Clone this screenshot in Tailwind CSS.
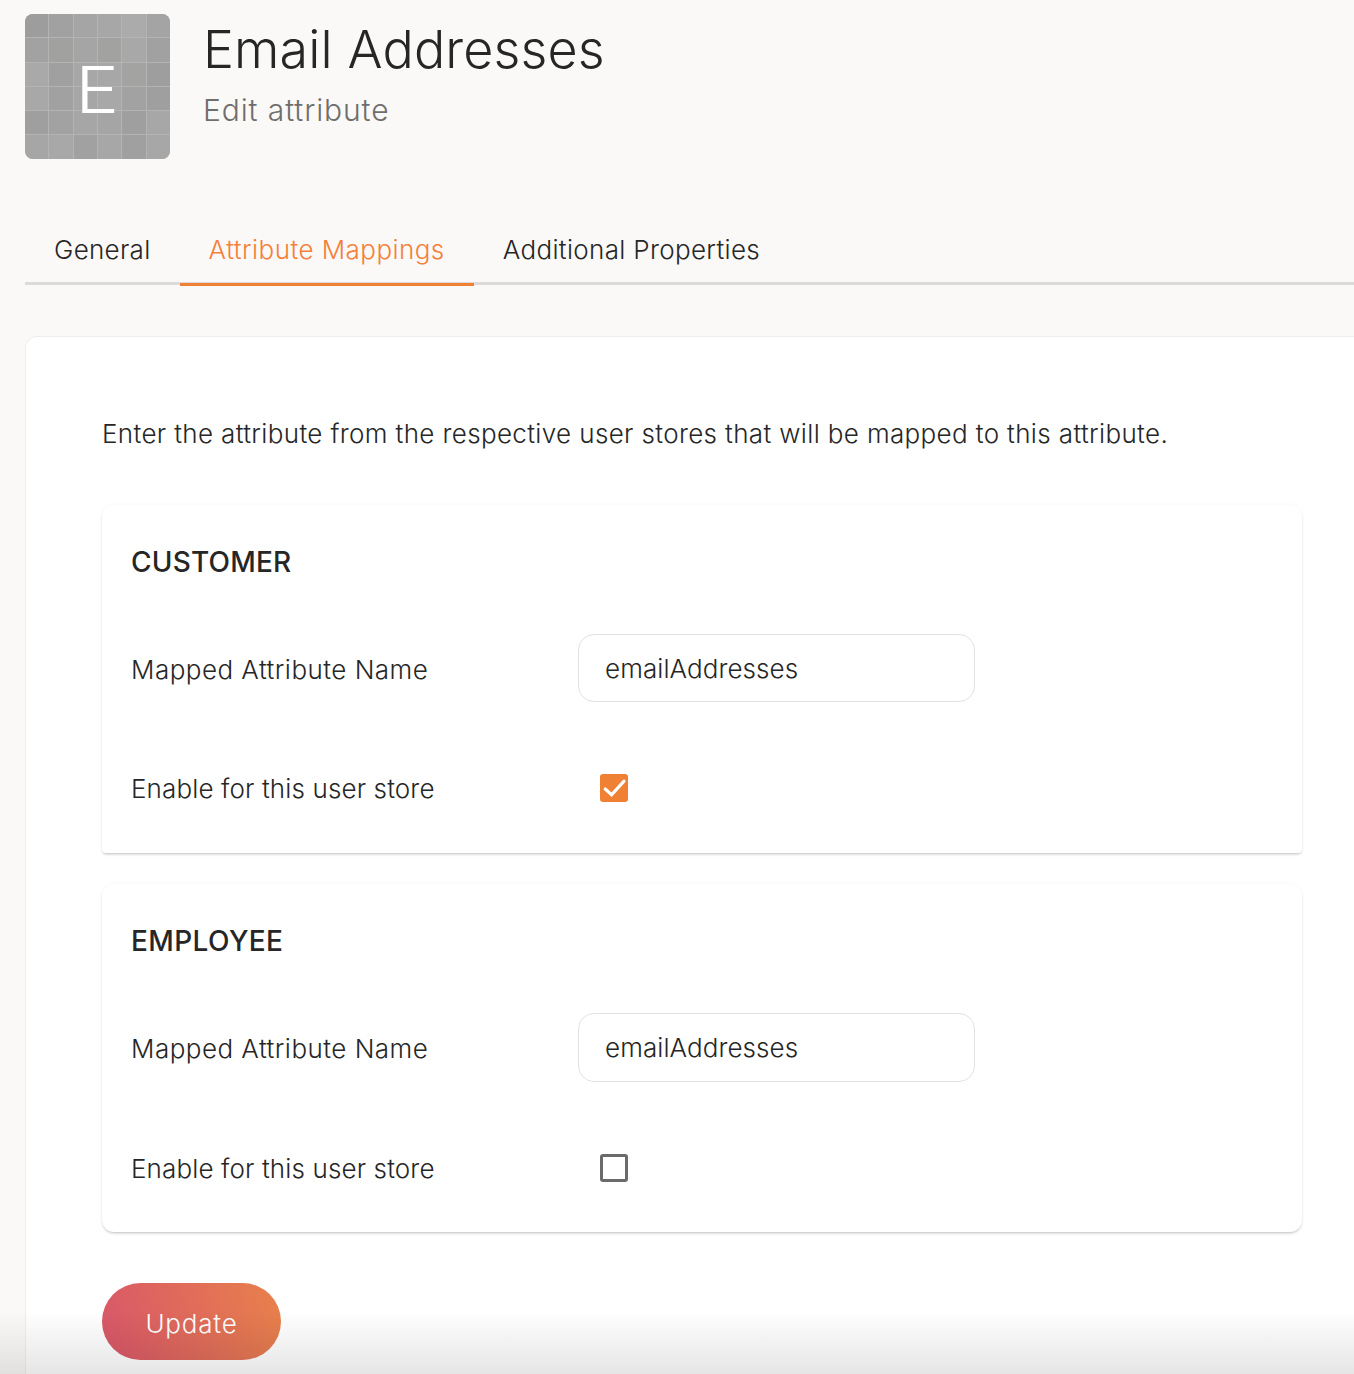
<!DOCTYPE html>
<html lang="en">
<head>
    <meta charset="UTF-8">
    <meta name="viewport" content="width=device-width, initial-scale=1.0">
    <title>Email Addresses | Edit attribute</title>
    <script src="https://cdn.jsdelivr.net/npm/@tailwindcss/browser@4"></script>
</head>
<body class="relative h-[1374px] overflow-hidden bg-[#faf9f7] font-['Inter',sans-serif] font-light text-[#262626]">
    <!-- Header -->
    <header class="flex pl-[25px] pt-[14px]">
        <div class="relative h-[145px] w-[145px] overflow-hidden rounded-lg bg-[#b4b4b4]">
            <div class="grid grid-cols-6 gap-px">
                <div class="h-[23.3px] bg-[#9d9d9d]"></div><div class="h-[23.3px] bg-[#a1a1a1]"></div><div class="h-[23.3px] bg-[#a5a5a5]"></div><div class="h-[23.3px] bg-[#a7a7a7]"></div><div class="h-[23.3px] bg-[#ababab]"></div><div class="h-[23.3px] bg-[#a4a4a4]"></div>
                <div class="h-[23.3px] bg-[#a2a2a2]"></div><div class="h-[23.3px] bg-[#a1a1a0]"></div><div class="h-[23.3px] bg-[#a5a5a5]"></div><div class="h-[23.3px] bg-[#a2a2a1]"></div><div class="h-[23.3px] bg-[#a8a8a8]"></div><div class="h-[23.3px] bg-[#a1a1a1]"></div>
                <div class="h-[23.3px] bg-[#a9a9a9]"></div><div class="h-[23.3px] bg-[#a0a0a0]"></div><div class="h-[23.3px] bg-[#a7a7a7]"></div><div class="h-[23.3px] bg-[#a7a7a7]"></div><div class="h-[23.3px] bg-[#a3a3a2]"></div><div class="h-[23.3px] bg-[#9e9e9e]"></div>
                <div class="h-[23.3px] bg-[#a8a8a8]"></div><div class="h-[23.3px] bg-[#a1a1a1]"></div><div class="h-[23.3px] bg-[#a6a6a6]"></div><div class="h-[23.3px] bg-[#a8a8a8]"></div><div class="h-[23.3px] bg-[#a2a2a2]"></div><div class="h-[23.3px] bg-[#9f9f9f]"></div>
                <div class="h-[23.3px] bg-[#9f9f9f]"></div><div class="h-[23.3px] bg-[#a2a2a2]"></div><div class="h-[23.3px] bg-[#a6a6a6]"></div><div class="h-[23.3px] bg-[#a5a5a5]"></div><div class="h-[23.3px] bg-[#9f9f9f]"></div><div class="h-[23.3px] bg-[#a7a7a7]"></div>
                <div class="h-[23.3px] bg-[#a6a6a6]"></div><div class="h-[23.3px] bg-[#a8a8a8]"></div><div class="h-[23.3px] bg-[#a1a1a1]"></div><div class="h-[23.3px] bg-[#a7a7a7]"></div><div class="h-[23.3px] bg-[#a0a0a0]"></div><div class="h-[23.3px] bg-[#a7a7a7]"></div>
            </div>
            <span class="absolute inset-0 flex items-center justify-center pt-[6px] text-[64px] font-light leading-none text-white"><span class="scale-x-[1.15]">E</span></span>
        </div>
        <div class="ml-[33px]">
            <h1 class="mt-[4px] text-[52px] leading-[64px] font-light tracking-[0.13px]">Email Addresses</h1>
            <p class="mt-[10px] text-[30px] leading-[36px] tracking-[0.9px] text-[#6e6e6c]">Edit attribute</p>
        </div>
    </header>

    <!-- Tabs -->
    <nav class="ml-[25px] mt-[53px] flex h-[73px] border-b-[3px] border-[#dcdbda] text-[26px]">
        <a class="px-[29px] pt-[18px] tracking-[0.3px]">General</a>
        <a class="-mb-[4px] border-b-[3px] border-[#f08034] px-[29px] pt-[18px] tracking-[0.45px] text-[#f4803a]">Attribute Mappings</a>
        <a class="px-[29px] pt-[18px] tracking-[0.33px]">Additional Properties</a>
    </nav>

    <!-- Main card -->
    <main class="ml-[25px] mt-[51px] rounded-tl-xl border-l border-t border-[#efeeed] bg-white pb-[40px] pl-[76px] pr-[52px] pt-[79px]">
        <p class="text-[26px] leading-[36px] tracking-[0.36px]">Enter the attribute from the respective user stores that will be mapped to this attribute.</p>

        <section class="mt-[53px] h-[348px] rounded-t-xl rounded-b-sm bg-white px-[29px] pt-[39px] shadow-[0_2px_3px_-1px_rgba(0,0,0,0.25),0_0_5px_rgba(0,0,0,0.03)]">
            <h2 class="text-[28px] leading-[36px] font-medium tracking-[0.2px]">CUSTOMER</h2>
            <div class="mt-[54px] flex items-center">
                <label class="w-[447px] pt-[2px] text-[26px] tracking-[0.47px]">Mapped Attribute Name</label>
                <div class="flex h-[68px] w-[397px] items-center rounded-2xl border border-[#e2e2e2] pl-[26px] text-[26px] tracking-[0.07px]">emailAddresses</div>
            </div>
            <div class="mt-[65px] flex items-center">
                <label class="w-[469px] pt-[2px] text-[26px] tracking-[0.13px]">Enable for this user store</label>
                <span class="flex h-[28px] w-[28px] items-center justify-center rounded-[3px] bg-[#f08034]">
                    <svg viewBox="0 0 28 28" class="h-[28px] w-[28px]" fill="none" stroke="white" stroke-width="3.2" stroke-linecap="round"><path d="M5.2 15l6.4 5.8L24 7.2"/></svg>
                </span>
            </div>
        </section>

        <section class="mt-[31px] h-[348px] rounded-xl bg-white px-[29px] pt-[39px] shadow-[0_2px_3px_-1px_rgba(0,0,0,0.25),0_0_5px_rgba(0,0,0,0.03)]">
            <h2 class="text-[28px] leading-[36px] font-medium tracking-[0.4px]">EMPLOYEE</h2>
            <div class="mt-[54px] flex items-center">
                <label class="w-[447px] pt-[2px] text-[26px] tracking-[0.47px]">Mapped Attribute Name</label>
                <div class="flex h-[69px] w-[397px] items-center rounded-2xl border border-[#e2e2e2] pl-[26px] text-[26px] tracking-[0.07px]">emailAddresses</div>
            </div>
            <div class="mt-[65px] flex items-center">
                <label class="w-[469px] pt-[2px] text-[26px] tracking-[0.13px]">Enable for this user store</label>
                <span class="h-[28px] w-[28px] rounded-[3px] border-[3px] border-[#6b6b6b]"></span>
            </div>
        </section>

        <button class="mt-[51px] h-[77px] w-[179px] rounded-full bg-[linear-gradient(75deg,#d8566a,#e8814b)] pt-[3px] text-[26px] font-light tracking-[0.8px] text-white">Update</button>
    </main>

    <!-- Bottom fade -->
    <div class="pointer-events-none absolute inset-x-0 bottom-0 h-[64px] bg-gradient-to-b from-transparent to-black/10"></div>
</body>
</html>
